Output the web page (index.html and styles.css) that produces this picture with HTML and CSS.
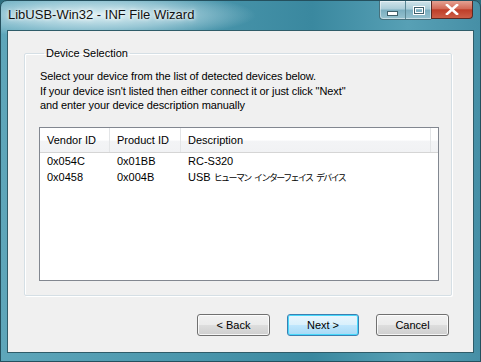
FILE: index.html
```html
<!DOCTYPE html>
<html>
<head>
<meta charset="utf-8">
<link rel="stylesheet" href="styles.css">
</head>
<body>
<div class="window">
  <div class="titlebar">
    <div class="title">LibUSB-Win32 - INF File Wizard</div>
    <div class="caption">
      <div class="cap-group">
        <div class="cap-btn cap-min"><span class="min-glyph"></span></div>
        <div class="cap-btn cap-max"><span class="max-glyph"></span></div>
      </div>
      <div class="cap-close">
        <svg width="14" height="11" viewBox="0 0 14 11"><path d="M2 1 L12 10 M12 1 L2 10" stroke="#fff" stroke-width="2.6" stroke-linecap="square"/></svg>
      </div>
    </div>
  </div>
  <div class="client">
    <fieldset class="group">
      <legend class="group-label">Device Selection</legend>
      <p class="intro">Select your device from the list of detected devices below.<br>If your device isn't listed then either connect it or just click "Next"<br>and enter your device description manually</p>
      <div class="listview">
        <div class="lv-header">
          <div class="col c1">Vendor ID</div>
          <div class="col c2">Product ID</div>
          <div class="col c3">Description</div>
          <div class="col c4"></div>
        </div>
        <div class="lv-row">
          <div class="cell c1">0x054C</div>
          <div class="cell c2">0x01BB</div>
          <div class="cell c3">RC-S320</div>
        </div>
        <div class="lv-row">
          <div class="cell c1">0x0458</div>
          <div class="cell c2">0x004B</div>
          <div class="cell c3">USB <span class="jp">ヒューマン インターフェイス デバイス</span></div>
        </div>
      </div>
    </fieldset>
    <div class="buttons">
      <button class="btn">&lt; Back</button>
      <button class="btn btn-default">Next &gt;</button>
      <button class="btn btn-cancel">Cancel</button>
    </div>
  </div>
</div>
</body>
</html>
```

FILE: styles.css
```css
html, body {
  margin: 0;
  padding: 0;
  width: 481px;
  height: 362px;
  overflow: hidden;
  background: #2f6f80;
}
.window {
  box-sizing: border-box;
  width: 481px;
  height: 362px;
  display: flex;
  flex-direction: column;
  border: 1px solid #24505e;
  border-radius: 7px 7px 0 0;
  background:
    radial-gradient(ellipse 160px 24px at 95px 14px, rgba(230,245,248,0.95) 0%, rgba(190,222,232,0.65) 55%, rgba(190,222,232,0) 100%),
    linear-gradient(90deg, #5ea6ba 0%, #4a96ac 40%, #3a889f 65%, #57a0b5 85%, #468fa6 100%);
}
.titlebar {
  height: 28px;
  display: flex;
  justify-content: space-between;
  align-items: flex-start;
}
.title {
  font-family: "Liberation Sans", Arial, sans-serif;
  font-size: 13px;
  color: #111;
  padding: 6px 0 0 7px;
  text-shadow: 0 0 6px #fff, 0 0 3px #fff;
}
.caption {
  display: flex;
  margin-right: 7px;
}
.cap-group {
  display: flex;
  height: 18px;
  border: 1px solid #46707c;
  border-top: none;
  border-right: none;
  border-radius: 0 0 0 4px;
  background: linear-gradient(#d0e4ea 0%, #abcdd8 45%, #7aaebf 50%, #96c2cf 100%);
  box-shadow: inset 0 0 0 1px rgba(255,255,255,0.45);
}
.cap-btn {
  width: 25px;
  height: 18px;
  display: flex;
  align-items: center;
  justify-content: center;
}
.cap-min {
  border-right: 1px solid #5b8794;
}
.min-glyph {
  display: block;
  width: 9px;
  height: 3px;
  margin-top: 6px;
  background: #fff;
  border: 1px solid #3e5f6a;
}
.max-glyph {
  display: block;
  width: 8px;
  height: 5px;
  border: 1px solid #3e5f6a;
  box-shadow: inset 0 0 0 1px #fff, 0 0 0 1px #fff;
}
.cap-close {
  width: 42px;
  height: 18px;
  border: 1px solid #5a2a24;
  border-top: none;
  border-radius: 0 0 4px 0;
  box-sizing: border-box;
  display: flex;
  align-items: center;
  justify-content: center;
  background: linear-gradient(#e4a293 0%, #d36b58 45%, #be3e29 52%, #cc5e47 100%);
}
.client {
  flex: 1;
  margin: 1px 6px 8px 6px;
  border: 1px solid #2f5c69;
  background: #f0f0f0;
  display: flex;
  flex-direction: column;
  font-family: "Liberation Sans", Arial, sans-serif;
  font-size: 11px;
  color: #000;
}
.group {
  margin: 16px 24px 0 16px;
  padding: 10px 12px 0 14px;
  height: 249px;
  box-sizing: border-box;
  border: 1px solid #d5dfe5;
  border-radius: 2px;
  box-shadow: inset 1px 1px 0 #fff, 1px 1px 0 #fff;
}
.group-label {
  padding: 0 2px;
  margin-left: 5px;
  font-size: 11px;
}
.intro {
  margin: 0;
  line-height: 14.5px;
  padding-left: 1px;
  letter-spacing: -0.1px;
}
.listview {
  margin-top: 14px;
  height: 154px;
  box-sizing: border-box;
  border: 1px solid #828790;
  background: #fff;
}
.lv-header {
  display: flex;
  height: 24px;
  background: linear-gradient(#ffffff 0%, #ffffff 50%, #f3f4f6 55%, #f1f2f4 100%);
  border-bottom: 1px solid #d5d5d5;
}
.col {
  box-sizing: border-box;
  padding-left: 7px;
  line-height: 24px;
  border-right: 1px solid #e3e5e7;
}
.c1 { width: 70px; }
.c2 { width: 71px; }
.c3 { width: 250px; }
.c4 { flex: 1; border-right: none; }
.lv-row {
  display: flex;
  height: 16px;
  line-height: 16px;
}
.cell {
  box-sizing: border-box;
  padding-left: 7px;
  white-space: nowrap;
}
.jp {
  font-family: "Noto Sans CJK JP", sans-serif;
  font-size: 9px;
  letter-spacing: -1.6px;
  word-spacing: 3px;
}
.buttons {
  display: flex;
  justify-content: flex-end;
  gap: 17px;
  margin: 18px 24px 0 0;
}
.btn {
  width: 73px;
  height: 22px;
  box-sizing: border-box;
  font-family: "Liberation Sans", Arial, sans-serif;
  font-size: 11px;
  color: #000;
  border: 1px solid #707070;
  border-radius: 3px;
  background: linear-gradient(#f2f2f2 0%, #ebebeb 48%, #dddddd 52%, #cfcfcf 100%);
  box-shadow: inset 0 0 0 1px rgba(255,255,255,0.8);
  padding: 0;
}
.btn-default {
  width: 72px;
  border-color: #3c7fb1;
  background: linear-gradient(#eaf6fd 0%, #d9f0fc 48%, #bee6fd 52%, #a7d9f5 100%);
  box-shadow: inset 0 0 0 1px #48d8fb;
}
```
